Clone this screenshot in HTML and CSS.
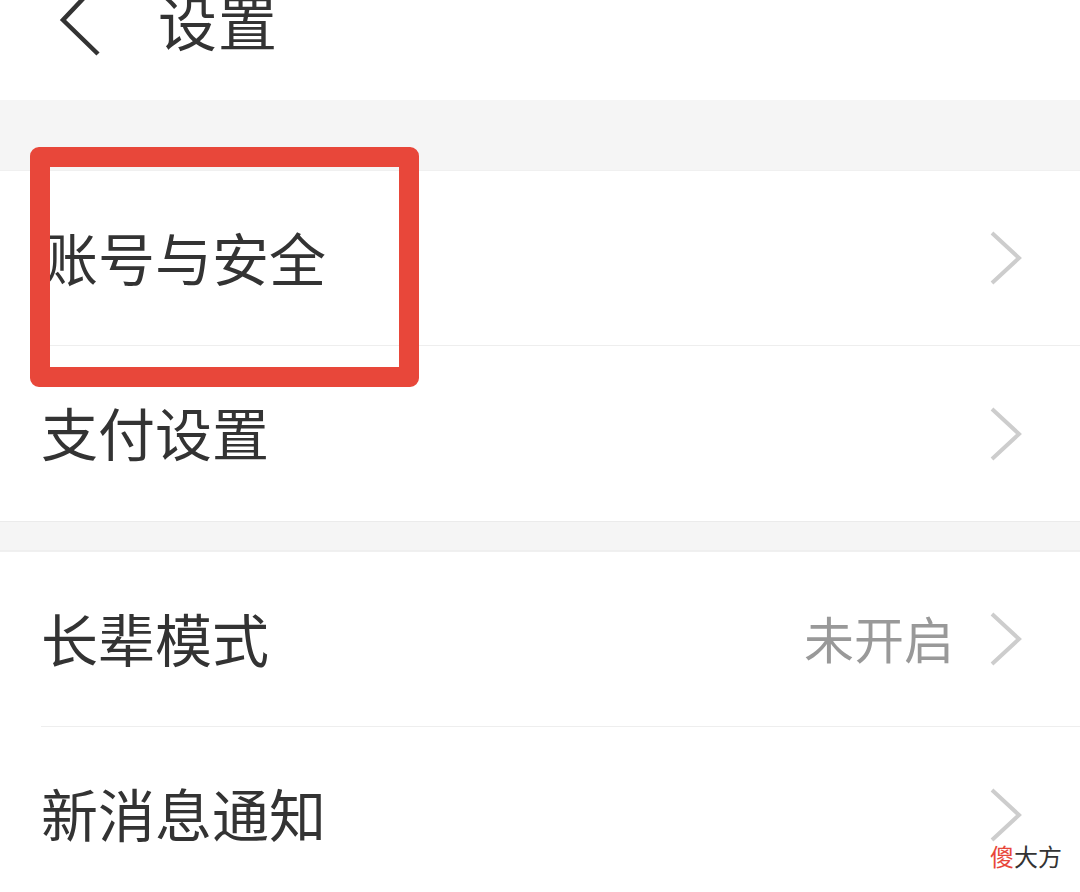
FILE: index.html
```html
<!DOCTYPE html>
<html lang="zh-CN">
<head>
<meta charset="utf-8">
<title>设置</title>
<link rel="stylesheet" href="styles.css">
</head>
<body>
<div class="page">
  <header class="header">
    <svg class="back" width="48" height="80" viewBox="0 0 48 80">
      <polyline points="37,-14 5,20 40,54" fill="none" stroke="#333" stroke-width="4.5"/>
    </svg>
    <h1 class="title">设置</h1>
  </header>
  <div class="band band-top"></div>
  <section class="group">
    <div class="row">
      <span class="label">账号与安全</span>
      <span class="right"><svg class="chev" width="36" height="56" viewBox="0 0 36 56"><polyline points="4,3 31,28 4,53" fill="none" stroke="#cdcdcd" stroke-width="4"/></svg></span>
    </div>
    <div class="row">
      <span class="label">支付设置</span>
      <span class="right"><svg class="chev" width="36" height="56" viewBox="0 0 36 56"><polyline points="4,3 31,28 4,53" fill="none" stroke="#cdcdcd" stroke-width="4"/></svg></span>
    </div>
  </section>
  <div class="band band-mid"></div>
  <section class="group">
    <div class="row">
      <span class="label">长辈模式</span>
      <span class="right"><span class="value">未开启</span><svg class="chev" width="36" height="56" viewBox="0 0 36 56"><polyline points="4,3 31,28 4,53" fill="none" stroke="#cdcdcd" stroke-width="4"/></svg></span>
    </div>
    <div class="row">
      <span class="label">新消息通知</span>
      <span class="right"><svg class="chev" width="36" height="56" viewBox="0 0 36 56"><polyline points="4,3 31,28 4,53" fill="none" stroke="#cdcdcd" stroke-width="4"/></svg></span>
    </div>
  </section>
  <div class="highlight"></div>
  <div class="watermark"><span class="wm-red">傻</span>大方</div>
</div>
</body>
</html>
```
FILE: styles.css
```css
html, body {
  margin: 0;
  padding: 0;
  background: #ffffff;
}
body {
  font-family: "Noto Sans CJK SC", "Noto Sans", sans-serif;
  color: #333333;
}
.page {
  position: relative;
  width: 1080px;
  height: 892px;
  overflow: hidden;
  background: #ffffff;
}
.header {
  height: 100px;
  display: flex;
  align-items: flex-start;
  padding-left: 58px;
  box-sizing: border-box;
}
.back {
  display: block;
  overflow: visible;
}
.title {
  margin: -9px 0 0 52px;
  font-size: 59px;
  font-weight: 400;
  line-height: 1;
  color: #333333;
  letter-spacing: 1px;
}
.band {
  background: #f5f5f5;
  box-sizing: border-box;
}
.band-top {
  height: 70px;
}
.band-mid {
  height: 30px;
  border-top: 1px solid #ebebeb;
  border-bottom: 1px solid #efefef;
}
.group {
  background: #ffffff;
  border-top: 1px solid #f0f0f0;
}
.row {
  height: 175px;
  display: flex;
  align-items: center;
  justify-content: space-between;
  margin-left: 41px;
  padding-right: 56px;
  border-bottom: 1px solid #eeeeee;
  box-sizing: border-box;
}
.group .row:last-child {
  border-bottom: none;
}
.label {
  font-size: 57px;
  line-height: 1;
  color: #333333;
  margin-top: -4px;
}
.right {
  display: flex;
  align-items: center;
}
.value {
  font-size: 50px;
  line-height: 1;
  color: #999999;
  margin-right: 34px;
  margin-top: -4px;
}
.chev {
  display: block;
}
.highlight {
  position: absolute;
  left: 30px;
  top: 147px;
  width: 389px;
  height: 240px;
  border: 20px solid #e8473a;
  border-radius: 9px;
  box-sizing: border-box;
}
.watermark {
  position: absolute;
  right: 18px;
  bottom: 24px;
  font-size: 24px;
  line-height: 1;
  color: #333333;
}
.wm-red {
  color: #e8473a;
}
```
